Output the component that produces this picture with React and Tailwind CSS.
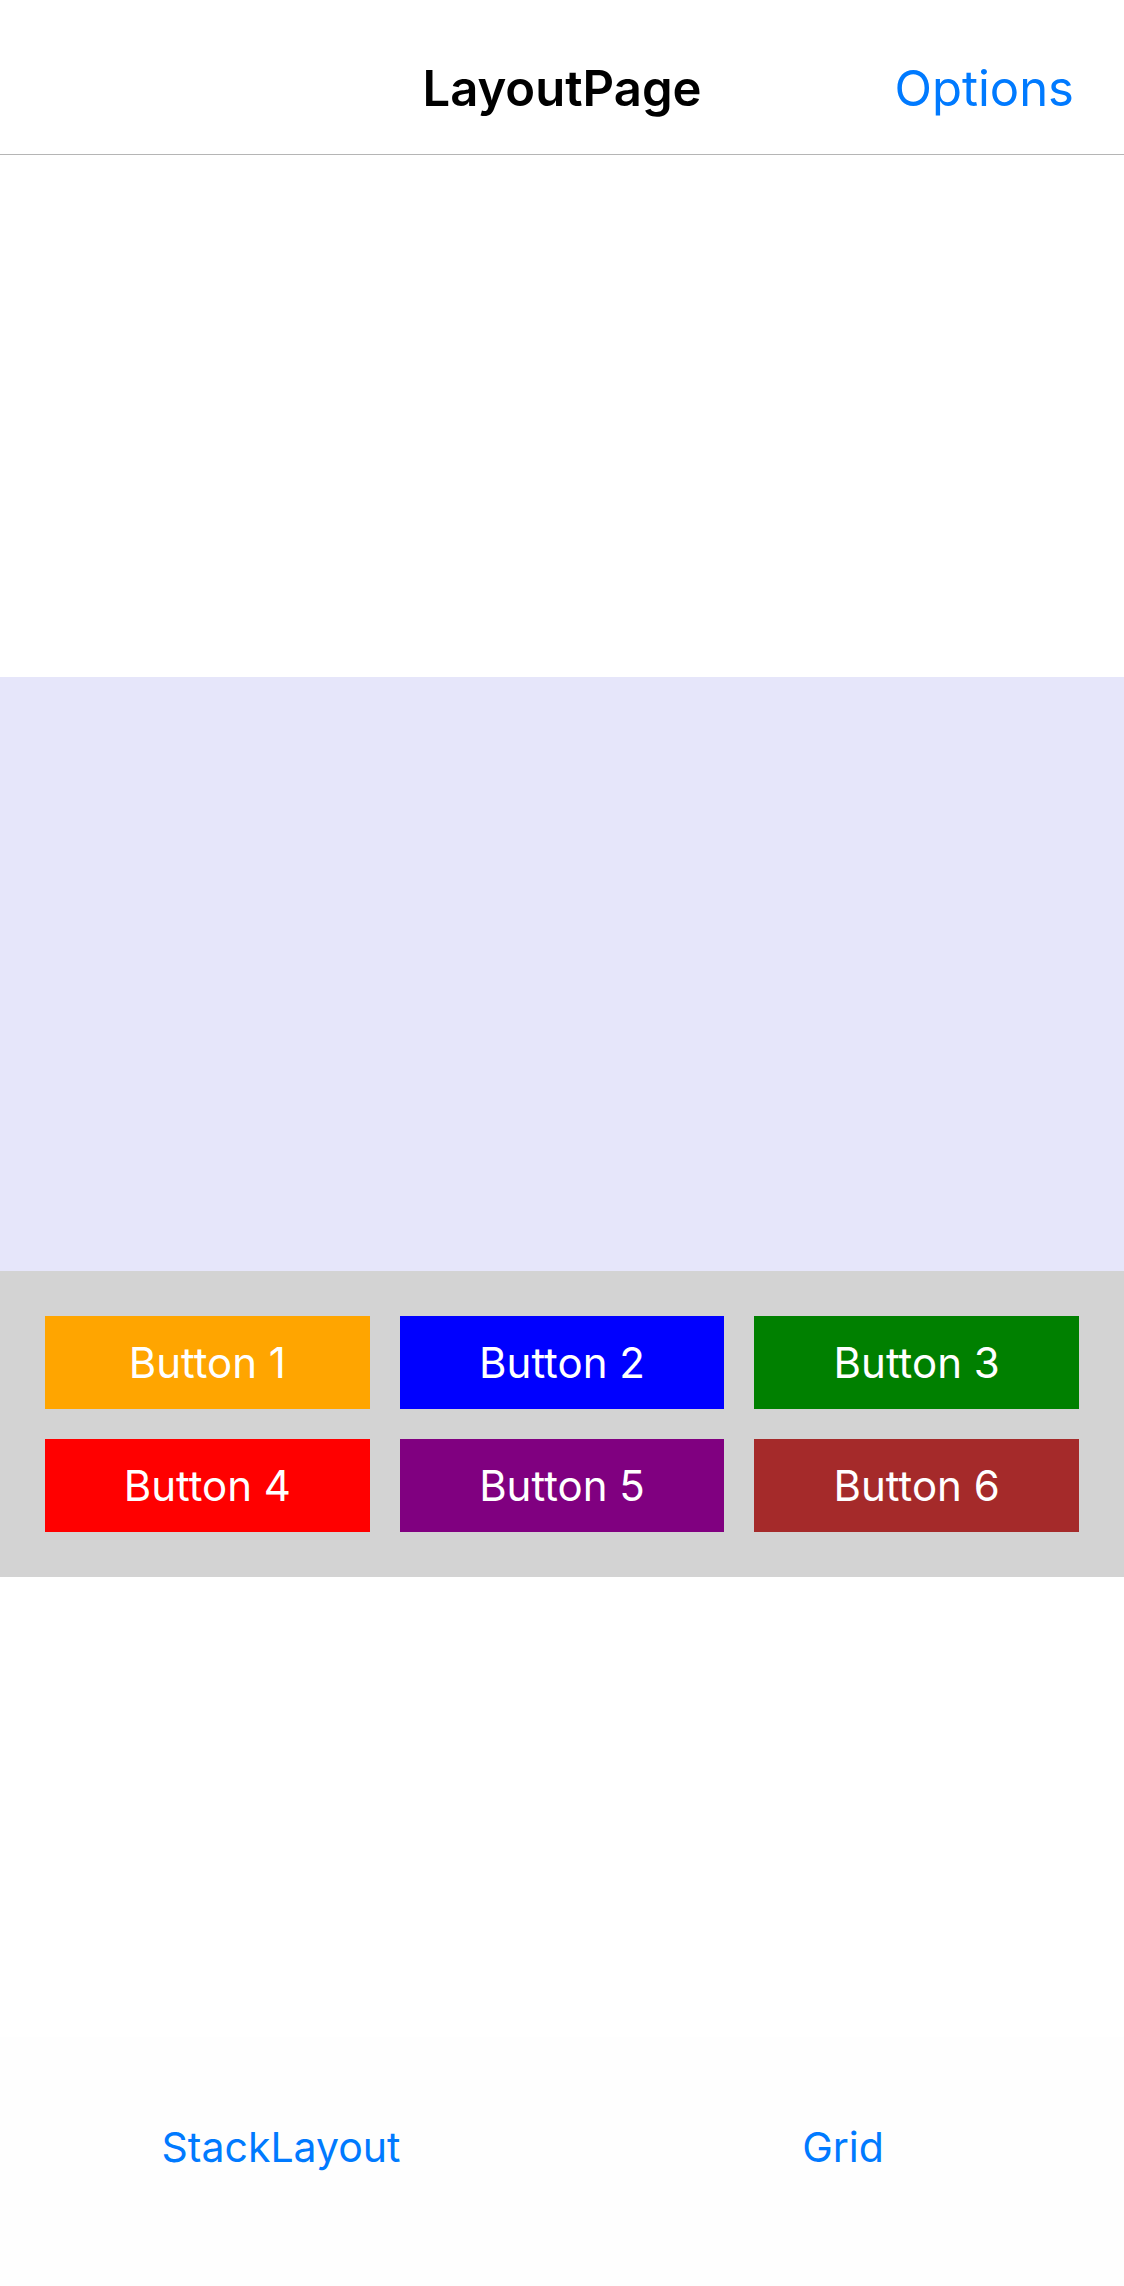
import React from "react";

const buttons = [
  { label: "Button 1", color: "bg-[#ffa500]" },
  { label: "Button 2", color: "bg-[#0000ff]" },
  { label: "Button 3", color: "bg-[#008000]" },
  { label: "Button 4", color: "bg-[#ff0000]" },
  { label: "Button 5", color: "bg-[#800080]" },
  { label: "Button 6", color: "bg-[#a52a2a]" },
];

export default function App() {
  return (
    <div className="flex h-[2286px] w-full flex-col bg-white font-['Inter',sans-serif] antialiased">
      {/* NAV BAR */}
      <header className="relative h-[155px] shrink-0 border-b border-[#b5b5b5] bg-white">
        <div className="grid grid-cols-3 items-start px-[50px] pt-[59px]">
          <div />
          <h1 className="whitespace-nowrap text-center text-[49px] font-semibold leading-[60px] text-black">
            LayoutPage
          </h1>
          <div className="text-right text-[49px] leading-[60px] text-[#007aff]">Options</div>
        </div>
      </header>

      {/* CONTEÚDO */}
      <div className="h-[522px] shrink-0 bg-white" />
      <div className="h-[594px] shrink-0 bg-[#e6e6fa]" />
      <div className="grid shrink-0 grid-cols-3 gap-x-[30px] gap-y-[30px] bg-[#d3d3d3] p-[45px]">
        {buttons.map((b) => (
          <button
            key={b.label}
            className={`flex h-[93px] items-center justify-center text-[42px] text-white ${b.color}`}
          >
            {b.label}
          </button>
        ))}
      </div>
      <div className="flex-1 bg-white" />

      {/* TAB BAR */}
      <nav className="grid h-[249px] shrink-0 grid-cols-2 bg-[#fefefe] pt-[86px]">
        <div className="text-center text-[41px] leading-[48px] text-[#007aff]">StackLayout</div>
        <div className="text-center text-[41px] leading-[48px] text-[#007aff]">Grid</div>
      </nav>
    </div>
  );
}
